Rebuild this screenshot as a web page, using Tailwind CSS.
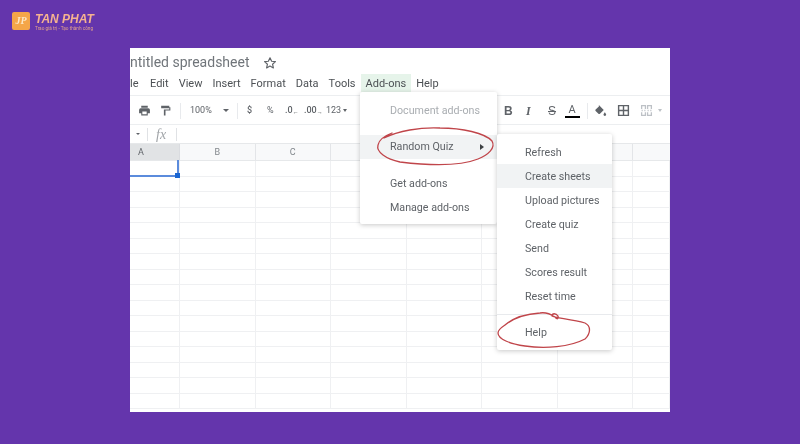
<!DOCTYPE html>
<html lang="en">

<head>
    <meta charset="UTF-8">
    <meta name="viewport" content="width=device-width, initial-scale=1.0">
    <title>Random Quiz add-on</title>
    <script src="https://cdn.jsdelivr.net/npm/@tailwindcss/browser@4"></script>
</head>

<body>
    <div class="relative w-[800px] h-[444px] overflow-hidden bg-[#6435ac] font-['Roboto',sans-serif]">

        <!-- logo -->
        <div class="h-[48px] pl-[12px] pt-[12px] flex items-start gap-[5px] blur-[0.5px]">
            <div class="w-[18px] h-[18px] rounded-[2px] bg-[#f5a648] flex items-center justify-center">
                <span class="text-[10px] leading-none italic font-bold text-[#fde9c8] font-['Liberation_Serif',serif]">JP</span>
            </div>
            <div class="flex flex-col pt-[1px]">
                <span class="text-[12px] leading-[12px] italic font-bold text-[#f5b290] font-['Liberation_Sans',sans-serif]">TAN PHAT</span>
                <span class="text-[4.700px] leading-[7px] text-[#e0a08c] whitespace-nowrap">Trao giá trị - Tạo thành công</span>
            </div>
        </div>

        <!-- sheet window -->
        <div class="ml-[130px] w-[540px] h-[364px] bg-white overflow-hidden flex flex-col blur-[0.4px] text-[#5f6368]">
            <div class="h-[24px] flex items-end text-[14px] leading-[20px] text-[#70757a] whitespace-nowrap">
                <span class="w-[120px]">ntitled spreadsheet</span>
                <svg class="ml-[13px] mb-[2px] w-[14px] h-[14px]" viewBox="0 0 24 24" fill="none" stroke="#5f6368" stroke-width="2" stroke-linejoin="round">
                    <path d="M12 3l2.8 6 6.5.7-4.9 4.4 1.4 6.4L12 17.2l-5.8 3.3 1.4-6.4-4.9-4.4 6.5-.7z" />
                </svg>
            </div>

            <div class="h-[23px] pt-[1px] flex items-center gap-[10px] text-[11px] text-[#4c5054] whitespace-nowrap">
                <span class="w-[10px]">le</span>
                <span>Edit</span>
                <span>View</span>
                <span>Insert</span>
                <span>Format</span>
                <span>Data</span>
                <span>Tools</span>
                <span class="relative z-10 bg-[#e6f4ea] mx-[-5px] px-[5px] h-[20px] leading-[20px]">Add-ons</span>
                <span>Help</span>
            </div>

            <!-- toolbar -->
            <div class="h-[30px] shrink-0 pt-[1px] border-y border-[#eceef0] flex items-center text-[9px] text-[#5f6368] whitespace-nowrap">
                <svg class="ml-[8px] w-[13px] h-[13px]" viewBox="0 0 24 24" fill="#5f6368">
                    <path d="M19 8H5a3 3 0 0 0-3 3v6h4v4h12v-4h4v-6a3 3 0 0 0-3-3zm-3 11H8v-5h8v5zM18 3H6v4h12z" />
                </svg>
                <svg class="ml-[8px] w-[13px] h-[13px]" viewBox="0 0 24 24" fill="#5f6368">
                    <path d="M4 3h15v3h2v6h-9v9H9V10h10V8H4z" />
                </svg>
                <div class="ml-[8px] w-px h-[16px] bg-[#e8eaed]"></div>
                <span class="ml-[9px] w-[25px]">100%</span>
                <span class="ml-[8px] w-0 h-0 border-x-[3px] border-t-[3px] border-x-transparent border-t-[#5f6368]"></span>
                <div class="ml-[8px] w-px h-[16px] bg-[#e8eaed]"></div>
                <span class="ml-[9px] w-[20px] font-medium">$</span>
                <span class="w-[18px]">%</span>
                <span class="w-[19px] font-medium">.0<sub class="text-[6px] leading-none text-[#3c4043]">←</sub></span>
                <span class="w-[22px] font-medium">.00<sub class="text-[6px] leading-none text-[#3c4043]">→</sub></span>
                <span class="w-[17px]">123</span>
                <span class="w-0 h-0 border-x-[2.500px] border-t-[3px] border-x-transparent border-t-[#5f6368]"></span>
                <span class="ml-[157px] w-[22px] text-[12px] font-bold font-['Liberation_Sans',sans-serif]">B</span>
                <span class="w-[22px] text-[12px] font-bold italic font-['Liberation_Serif',serif]">I</span>
                <span class="w-[15px] text-[12px] line-through font-['Liberation_Sans',sans-serif]">S</span>
                <span class="w-[18px] flex flex-col items-center text-[11px] leading-[12px] text-[#5f6368]">A<span class="block w-[15px] h-[2px] bg-black"></span></span>
                <div class="ml-[6px] w-px h-[16px] bg-[#e8eaed]"></div>
                <svg class="ml-[6px] w-[13px] h-[13px]" viewBox="0 0 24 24" fill="#5f6368">
                    <path d="M9 2l9 9-7 7a2 2 0 0 1-2.800 0L3 13a2 2 0 0 1 0-2.800L9 4.500zM20 15s2.500 3 2.500 4.500a2.500 2.500 0 0 1-5 0C17.500 18 20 15 20 15z" />
                </svg>
                <svg class="ml-[10px] w-[13px] h-[13px]" viewBox="0 0 24 24" fill="none" stroke="#5f6368" stroke-width="2.600">
                    <path d="M3 3h18v18H3zM3 12h18M12 3v18" />
                </svg>
                <svg class="ml-[10px] w-[13px] h-[13px]" viewBox="0 0 24 24" fill="none" stroke="#bdc1c6" stroke-width="2.400">
                    <path d="M3 9V3h7v6M14 9V3h7v6M3 15v6h7v-6M14 15v6h7v-6M3 12h2M8 12h2M14 12h2M19 12h2" />
                </svg>
                <span class="ml-[5px] w-0 h-0 border-x-[2.500px] border-t-[3px] border-x-transparent border-t-[#bdc1c6]"></span>
            </div>

            <!-- formula bar -->
            <div class="h-[18px] shrink-0 flex items-center text-[#80868b]">
                <span class="ml-[6px] w-0 h-0 border-x-[2px] border-t-[2px] border-x-transparent border-t-[#5f6368]"></span>
                <div class="ml-[7px] w-px h-[13px] bg-[#e0e2e5]"></div>
                <span class="ml-[8px] w-[18px] text-[14px] italic font-['Liberation_Serif',serif] text-[#a0a4a8]">fx</span>
                <div class="ml-[2px] w-px h-[13px] bg-[#e0e2e5]"></div>
            </div>

            <!-- column headers -->
            <div class="h-[18px] shrink-0 flex bg-[#f8f9fa] border-y border-[#e6e8ea] text-[9px] leading-[16px] text-center text-[#80868b]">
                <div class="w-[50px] bg-[#e1e3e5] text-[#5f6368] border-r border-[#dadce0] text-left pl-[8px]">A</div>
                <div class="w-[75.500px] border-r border-[#e3e5e8]">B</div>
                <div class="w-[75.500px] border-r border-[#e3e5e8]">C</div>
                <div class="w-[75.500px] border-r border-[#e3e5e8]"></div>
                <div class="w-[75.500px] border-r border-[#e3e5e8]"></div>
                <div class="w-[75.500px] border-r border-[#e3e5e8]"></div>
                <div class="w-[75.500px] border-r border-[#e3e5e8]"></div>
                <div class="flex-1"></div>
            </div>

            <!-- cells -->
            <div id="cells" class="relative flex-1 flex flex-col"></div>
        </div>

        <!-- add-ons menu -->
        <div class="absolute left-[360px] top-[92px] w-[137px] h-[132px] bg-white rounded-[2px] shadow-[0_1px_5px_rgba(0,0,0,0.22)] pt-[7px] text-[10.700px] leading-[24px] text-[#5f6368] blur-[0.4px]">
            <div class="pl-[30px] text-[#a9adb1]">Document add-ons</div>
            <div class="mt-[12px] h-[24px] pl-[30px] pr-[13px] bg-[#f1f3f4] flex items-center justify-between">Random Quiz
                <span class="w-0 h-0 border-y-[3px] border-l-[4px] border-y-transparent border-l-[#3c4043]"></span>
            </div>
            <div class="mt-[13px] pl-[30px]">Get add-ons</div>
            <div class="pl-[30px]">Manage add-ons</div>
        </div>

        <!-- quiz submenu -->
        <div class="absolute left-[497px] top-[134px] w-[115px] h-[216px] bg-white rounded-[2px] shadow-[0_1px_5px_rgba(0,0,0,0.22)] pt-[6px] text-[10.700px] leading-[24px] text-[#5f6368] blur-[0.4px]">
            <div class="pl-[28px] pt-[1px] h-[24px]">Refresh</div>
            <div class="pl-[28px] pt-[1px] h-[24px] bg-[#f1f3f4]">Create sheets</div>
            <div class="pl-[28px] pt-[1px] h-[24px]">Upload pictures</div>
            <div class="pl-[28px] pt-[1px] h-[24px]">Create quiz</div>
            <div class="pl-[28px] pt-[1px] h-[24px]">Send</div>
            <div class="pl-[28px] pt-[1px] h-[24px]">Scores result</div>
            <div class="pl-[28px] pt-[1px] h-[24px]">Reset time</div>
            <div class="mt-[6px] mb-[5px] border-t border-[#e8eaed]"></div>
            <div class="pl-[28px] pt-[1px]">Help</div>
        </div>

        <!-- hand drawn circles -->
        <svg class="absolute inset-0 w-[800px] h-[444px] pointer-events-none blur-[0.3px]" viewBox="0 0 800 444" fill="none" stroke="#c0454a" stroke-width="1.300" stroke-linecap="round">
            <path d="M384 138C398 131 420 127 440 128C462 128 485 133 492 141C496 148 488 155 478 159C458 167 425 165 400 162C386 159 376 152 378 145C379 140 384 136 392 133" />
            <path d="M505 325C512 319 525 314 540 313C546 312 552 315 555 317C556 319 559 320 558 316C556 313 552 313 552 316C555 318 572 319 585 323C591 326 591 333 585 339C570 347 545 349 525 346C510 344 498 339 498 333C498 330 502 327 505 325" />
        </svg>
    </div>

    <script>
        // grid lines for the empty sheet
        const cells = document.getElementById("cells");
        const widths = [50, 75.5, 75.5, 75.5, 75.5, 75.5, 75.5, 37];
        for (let r = 0; r < 16; r++) {
            const row = document.createElement("div");
            row.className = "h-[15.520px] shrink-0 flex border-b border-[#eff0f2]";
            widths.forEach(w => {
                const cell = document.createElement("div");
                cell.className = "border-r border-[#eff0f2]";
                cell.style.width = w + "px";
                row.appendChild(cell);
            });
            cells.appendChild(row);
        }
        const sel = document.createElement("div");
        sel.className = "absolute left-[-2px] top-[-1px] w-[51px] h-[17px] border-r-2 border-b-2 border-[#5b8bdc]";
        sel.innerHTML = '<span class="absolute right-[-3px] bottom-[-3px] w-[5px] h-[5px] bg-[#1a66d2]"></span>';
        cells.appendChild(sel);
    </script>

</body>

</html>
